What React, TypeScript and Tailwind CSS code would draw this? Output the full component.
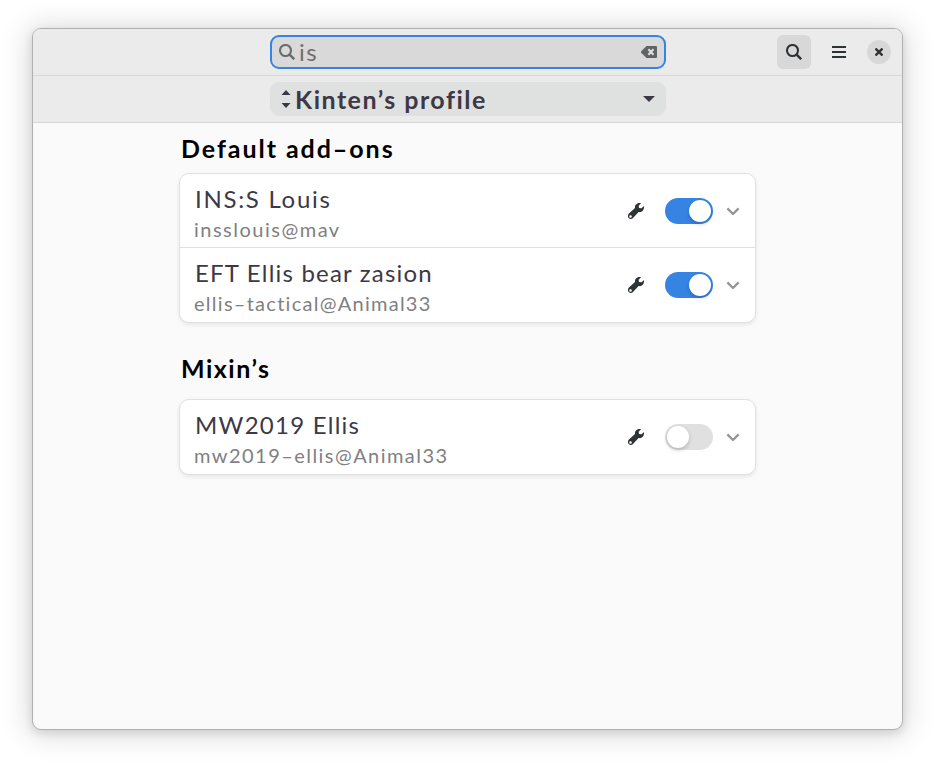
import React from "react";

function SearchIcon({ className }: { className: string }) {
  return (
    <svg className={className} width="16" height="16" viewBox="0 0 16 16" fill="none" stroke="currentColor">
      <circle cx="6.5" cy="6.5" r="5.5" strokeWidth="2.1" />
      <path d="M10.4 10.4 L15.2 15.2" strokeWidth="2.5" />
    </svg>
  );
}

function WrenchIcon() {
  return (
    <svg className="shrink-0 text-[#2e3436]" width="16" height="16" viewBox="0 0 16 16">
      <path
        fill="currentColor"
        fillRule="evenodd"
        d="M11.8 0 C9.2 0 6.9 1.7 6.9 4.2 L7 5.1 L0.9 10.6 C-0.3 11.8 -0.3 13.9 0.7 15.1 C1.8 16.3 3.9 16.2 5 15.1 L10.6 9.1 C11 9.2 11.4 9.2 11.8 9.2 C14.2 9.2 16 7.2 16 4.6 L16 3 L13.5 5.3 L11 5 L10.7 2.7 L13.1 0.2 Z M2.5 12.2 A1.3 1.3 0 1 1 2.5 14.8 A1.3 1.3 0 1 1 2.5 12.2 Z"
      />
    </svg>
  );
}

function Toggle({ on }: { on: boolean }) {
  return (
    <span
      className={
        on
          ? "ml-[21px] flex h-[26px] w-12 shrink-0 items-center justify-end rounded-full bg-[#3584e4] p-0.5"
          : "ml-[21px] flex h-[26px] w-12 shrink-0 items-center justify-start rounded-full bg-[#e0e0e0] p-0.5"
      }
    >
      <span className="size-[22px] rounded-full bg-white shadow-[0_2px_4px_rgba(0,0,0,0.2)]" />
    </span>
  );
}

type RowProps = { title: string; id: string; on: boolean; titleClass: string; idClass: string; divider?: boolean };

function AddonRow({ title, id, on, titleClass, idClass, divider }: RowProps) {
  return (
    <div className={divider ? "flex h-[74px] items-center border-b border-[#dfdfdf] pr-[15px] pl-[14px]" : "flex h-[74px] items-center pr-[15px] pl-[14px]"}>
      <div className="flex flex-1 flex-col pt-[4px] whitespace-nowrap">
        <span className={"pl-px text-2xl leading-[32px] text-[#3d3846] " + titleClass}>{title}</span>
        <span className={"text-[20px] leading-[28px] text-[#807f83] " + idClass}>{id}</span>
      </div>
      <WrenchIcon />
      <Toggle on={on} />
      <svg className="ml-[13px] shrink-0 text-[#949496]" width="14" height="8" viewBox="0 0 14 8" fill="none" stroke="currentColor" strokeWidth="2.2">
        <path d="M1.4 1.4 L7 7 L12.6 1.4" />
      </svg>
    </div>
  );
}

const card = "w-[577px] rounded-[10px] border border-[#e0e0e0] bg-white shadow-[0_2px_4px_rgba(0,0,0,0.08)]";

export default function App() {
  return (
    <div className="h-[766px] w-[935px] overflow-hidden bg-white pt-7 pl-8 font-['Lato',sans-serif]">
      <main className="flex h-[702px] w-[871px] flex-col overflow-hidden rounded-[9px] border border-[#b0b0b0] bg-[#fafafa] shadow-[0_3px_9px_1px_rgba(0,0,0,0.1),0_2px_28px_5px_rgba(0,0,0,0.13)]">
        <header className="flex h-[47px] items-center border-b border-[#d8d8d8] bg-[#ebebeb]">
          <div className="ml-[237px] flex h-[34px] w-[396px] items-center rounded-[9px] border-2 border-[#3584e4] bg-[#d9d9d9] pr-[7px] pl-[7px]">
            <SearchIcon className="text-[#6a6b6b]" />
            <span className="ml-1 flex-1 text-2xl leading-[30px] tracking-[1.5px] text-[#6f6f6f]">is</span>
            <svg className="text-[#616464]" width="16" height="12" viewBox="0 0 16 12">
              <path fill="currentColor" d="M5.5 0 H15 Q16 0 16 1 V11 Q16 12 15 12 H5.5 L0 6.4 V5.6 Z" />
              <path d="M7.4 3.3 L12.5 8.7 M12.5 3.3 L7.4 8.7" stroke="#e0e0e0" strokeWidth="2" />
            </svg>
          </div>
          <button className="ml-[111px] flex size-[34px] items-center justify-center rounded-md bg-[#d8d8d8]">
            <SearchIcon className="text-[#2e3436]" />
          </button>
          <button className="ml-[11px] flex size-[34px] items-center justify-center">
            <svg width="14" height="12" viewBox="0 0 14 12" fill="#2e3436">
              <path d="M0 0 H14 V2 H0 Z M0 5 H14 V7 H0 Z M0 10 H14 V12 H0 Z" />
            </svg>
          </button>
          <button className="ml-[11px] flex size-6 items-center justify-center rounded-full bg-[#d8d8d8]">
            <svg width="8" height="8" viewBox="0 0 8 8" stroke="#2e3436" strokeWidth="2.3">
              <path d="M0.5 0.5 L7.5 7.5 M7.5 0.5 L0.5 7.5" />
            </svg>
          </button>
        </header>
        <div className="flex h-[47px] items-center border-b border-[#d8d8d8] bg-[#ebebeb]">
          <div className="ml-[237px] flex h-[34px] w-[396px] items-center rounded-[9px] bg-[#dfe1e0] pr-[11px] pl-[11px] text-[#3d3846]">
            <svg width="10" height="18" viewBox="0 0 10 18" fill="currentColor">
              <path d="M0.5 5 L5 0 L9.5 5 Z M0.5 13 L5 18 L9.5 13 Z" />
            </svg>
            <span className="ml-1 flex-1 text-[25px] leading-[30px] font-bold tracking-[1.5px] whitespace-nowrap">Kinten’s profile</span>
            <svg width="12" height="6" viewBox="0 0 12 6" fill="currentColor">
              <path d="M0 0 H12 L6 6 Z" />
            </svg>
          </div>
        </div>
        <div className="flex flex-col pt-[9px] pl-[146px] text-black">
          <h2 className="mb-[9px] pl-[2px] text-[25px] leading-[32px] font-bold tracking-[1.95px]">Default add–ons</h2>
          <section className={card}>
            <AddonRow title="INS:S Louis" id="insslouis@mav" on titleClass="tracking-[1.7px]" idClass="tracking-[1.5px]" divider />
            <AddonRow title="EFT Ellis bear zasion" id="ellis–tactical@Animal33" on titleClass="tracking-[1.2px]" idClass="tracking-[1.27px]" />
          </section>
          <h2 className="mt-[29px] mb-[15px] pl-[2px] text-[25px] leading-[32px] font-bold tracking-[1.5px]">Mixin’s</h2>
          <section className={card}>
            <AddonRow title="MW2019 Ellis" id="mw2019–ellis@Animal33" on={false} titleClass="tracking-[1.25px]" idClass="tracking-[1.45px]" />
          </section>
        </div>
      </main>
    </div>
  );
}
